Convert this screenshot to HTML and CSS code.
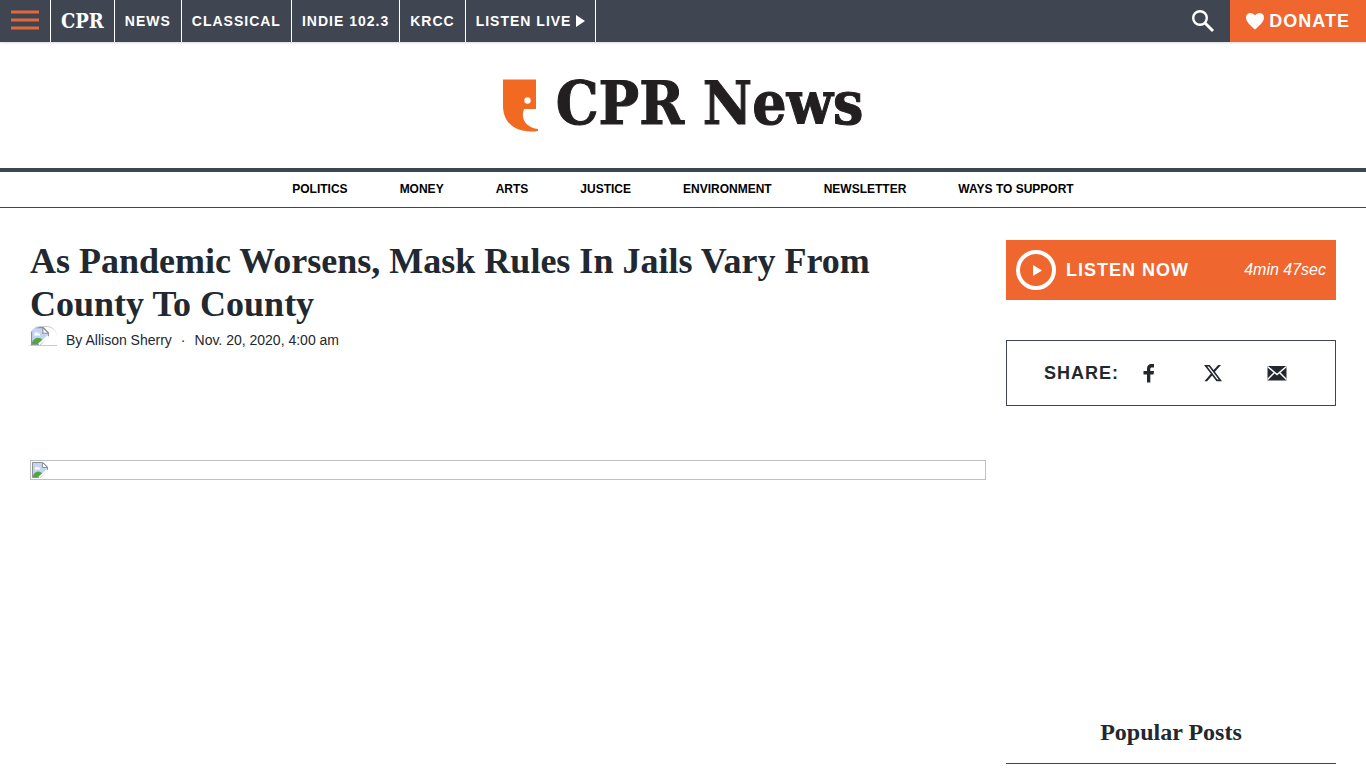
FILE: index.html
```html
<!DOCTYPE html>
<html lang="en">
<head>
<meta charset="utf-8">
<meta name="viewport" content="width=device-width, initial-scale=1">
<title>As Pandemic Worsens, Mask Rules In Jails Vary From County To County | CPR News</title>
<link rel="stylesheet" href="styles.css">
</head>
<body>
<svg class="defs" aria-hidden="true">
  <symbol id="broken" viewBox="0 0 16 16">
    <path d="M.5.5h10.500l4.500 4.500v10.500H.5z" fill="#c3d5f3" stroke="#8d9298"/>
    <path d="M3 6.500c0-2 2.500-2.500 3-1 2-.3 2.500 1.500 1.500 2H3z" fill="#fff"/>
    <path d="M1 15v-1.500c2-4.500 7-5.500 10-1l1 2.500z" fill="#53a541"/>
    <path d="M8.500 16l7.500-7.500V16z" fill="#fff"/>
    <path d="M7 15.500l8.500-7.500" stroke="#fff" stroke-width="2"/>
    <path d="M10.500.5v5h5z" fill="#fff" stroke="#8d9298"/>
  </symbol>
</svg>
<header>
  <div class="topbar">
    <button class="menu" type="button" aria-label="Menu">
      <svg width="28" height="20" viewBox="0 0 28 20"><path d="M0 2h28M0 10h28M0 18h28" stroke="#e2683a" stroke-width="3"/></svg>
    </button>
    <nav class="stations" aria-label="Stations">
      <a class="cpr" href="#">CPR</a>
      <a href="#">NEWS</a>
      <a href="#">CLASSICAL</a>
      <a href="#">INDIE 102.3</a>
      <a href="#">KRCC</a>
      <a class="live" href="#">LISTEN LIVE<svg width="9" height="12" viewBox="0 0 9 12"><path d="M0 0l9 6-9 6z" fill="#fff"/></svg></a>
    </nav>
    <button class="search" type="button" aria-label="Search">
      <svg width="24" height="24" viewBox="0 0 24 24" fill="none" stroke="#fff"><circle cx="9" cy="9" r="6.800" stroke-width="2.400"/><path d="M14 14l8 8" stroke-width="3"/></svg>
    </button>
    <a class="donate" href="#"><svg width="20" height="18" viewBox="0 0 20 18"><path d="M10 17.500C6 14 1 10 1 5.500 1 0 7.500-.5 10 3.500 12.500-.5 19 0 19 5.500c0 4.500-5 8.500-9 12z" fill="#fff"/></svg>DONATE</a>
  </div>
  <a class="brand" href="#">
    <svg width="36" height="54" viewBox="0 0 36 54"><path fill="#f26a21" fill-rule="evenodd" d="M0 1.500h33V31H21c-4 11 3 18.500 14 20v1.500c-1 1.500-6 1-11 .7C7 52 0 40 0 28zM24.500 19.300a3.200 3.200 0 1 0 0 6.400 3.200 3.200 0 0 0 0-6.400z"/></svg>
    <span>CPR News</span>
  </a>
  <nav class="sections" aria-label="Sections">
    <a href="#">POLITICS</a>
    <a href="#">MONEY</a>
    <a href="#">ARTS</a>
    <a href="#">JUSTICE</a>
    <a href="#">ENVIRONMENT</a>
    <a href="#">NEWSLETTER</a>
    <a href="#">WAYS TO SUPPORT</a>
  </nav>
</header>
<main>
  <article>
    <h1>As Pandemic Worsens, Mask Rules In Jails Vary From County To County</h1>
    <div class="byline">
      <span class="avatar"><svg width="18" height="18"><use href="#broken"/></svg></span>
      <span>By <a href="#">Allison Sherry</a></span>
      <span>·</span>
      <time datetime="2020-11-20T04:00">Nov. 20, 2020, 4:00 am</time>
    </div>
    <figure><svg width="16" height="16"><use href="#broken"/></svg></figure>
  </article>
  <aside>
    <button class="listen" type="button">
      <svg width="40" height="40" viewBox="0 0 40 40"><circle cx="20" cy="20" r="18" fill="none" stroke="#fff" stroke-width="4"/><path d="M17 15l9 5.500-9 5.500z" fill="#fff"/></svg>
      <strong>LISTEN NOW</strong>
      <em>4min 47sec</em>
    </button>
    <div class="share">
      <strong>SHARE:</strong>
      <a href="#" aria-label="Facebook"><svg width="20" height="20" viewBox="0 0 20 20"><path fill="#212830" d="M8 19.500v-8H4.500V8H8V5.500c0-3 2-4.500 4-4.500h3v3.500h-2c-1.500 0-1.700.5-1.700 1.500v2H15l-.5 3.500h-3.200v8z"/></svg></a>
      <a href="#" aria-label="X"><svg width="20" height="20" viewBox="0 0 24 24"><path fill="#212830" d="M18.240 2.250h3.310l-7.230 8.260 8.500 11.240h-6.650l-5.220-6.820L4.990 21.750H1.680l7.730-8.840L1.250 2.250h6.830l4.710 6.230zm-1.160 17.520h1.830L7.080 4.130H5.120z"/></svg></a>
      <a href="#" aria-label="Email"><svg width="20" height="20" viewBox="0 0 20 20"><path fill="#212830" d="M.5 3h19v14.500H.5z"/><path fill="none" stroke="#fff" stroke-width="1.500" d="M.5 3.500l9.500 8 9.500-8M.5 16.500l7-7M19.500 16.500l-7-7"/></svg></a>
    </div>
    <h2>Popular Posts</h2>
  </aside>
</main>
</body>
</html>
```
FILE: styles.css
```css
* {
  box-sizing: border-box;
}

html {
  overflow: hidden;
}

body {
  margin: 0;
  background: #fff;
  color: #212830;
  font-family: "Liberation Sans", Arial, sans-serif;
}

a {
  color: inherit;
  text-decoration: none;
}

button {
  border: 0;
  padding: 0;
  background: none;
  color: inherit;
  font: inherit;
  cursor: pointer;
}

svg {
  display: block;
  flex: none;
}

.defs {
  width: 0;
  height: 0;
  position: absolute;
}

.topbar {
  display: flex;
  height: 42px;
  background: #404552;
  color: #fff;
  font-weight: bold;
  box-shadow: 0 1px 2px #d9dae0;
}

.menu {
  display: flex;
  align-items: center;
  padding: 0 11px 2px;
  border-right: 1px solid #fff;
}

.stations {
  display: flex;
}

.stations a {
  display: flex;
  align-items: center;
  padding: 0 10px;
  border-right: 1px solid #fff;
  font-size: 14px;
  letter-spacing: 1px;
}

.stations .cpr {
  font-family: "DejaVu Serif Condensed", "DejaVu Serif", serif;
  font-size: 20px;
  letter-spacing: 0;
}

.live svg {
  margin-left: 5px;
}

.search {
  display: flex;
  align-items: center;
  margin-left: auto;
  padding: 0 15px;
}

.donate {
  display: flex;
  align-items: center;
  gap: 4px;
  padding: 0 16px 0 15px;
  background: #ef662f;
  font-size: 18px;
  letter-spacing: 1px;
}

.brand {
  display: flex;
  align-items: center;
  justify-content: center;
  gap: 17px;
  height: 126px;
  color: #231f20;
  font: bold 60px "DejaVu Serif Condensed", "DejaVu Serif", serif;
  -webkit-text-stroke: 1px #231f20;
  white-space: nowrap;
}

.brand span {
  padding-bottom: 4px;
}

.sections {
  display: flex;
  justify-content: center;
  gap: 52px;
  padding: 10px 0 11px;
  border-top: 4px solid #404552;
  border-bottom: 1px solid #404552;
  color: #000;
  font-size: 12px;
  font-weight: bold;
  line-height: 14px;
}

main {
  display: grid;
  grid-template-columns: minmax(0, 1fr) 330px;
  gap: 20px;
  padding: 32px 30px 0;
}

h1,
h2 {
  margin: 0;
  font-family: "Liberation Serif", "Times New Roman", serif;
}

h1 {
  font-size: 36px;
  line-height: 43px;
}

.byline {
  display: flex;
  align-items: center;
  gap: 9px;
  height: 28px;
  font-size: 14px;
}

.avatar {
  width: 27px;
  height: 20px;
  padding: 0 1px;
  border: solid #c8cbd0;
  border-width: 1px 0;
  border-radius: 10px 10px 0 0;
  overflow: hidden;
  align-self: flex-start;
}

figure {
  height: 20px;
  margin: 106px 0 0;
  padding: 1px;
  border: 1px solid #c0c0c0;
}

.listen {
  display: flex;
  align-items: center;
  gap: 10px;
  width: 100%;
  height: 60px;
  padding: 0 10px;
  background: #ef662f;
  color: #fff;
}

.listen strong,
.share strong {
  font-size: 18px;
  letter-spacing: 1px;
}

.listen em {
  margin-left: auto;
  font-size: 16px;
}

.share {
  display: flex;
  align-items: center;
  gap: 44px;
  height: 66px;
  margin-top: 40px;
  padding: 0 37px;
  border: 1px solid #404552;
}

.share strong {
  margin-right: -24px;
}

h2 {
  margin-top: 312px;
  padding-bottom: 17px;
  border-bottom: 1px solid #404552;
  font-size: 24px;
  line-height: 28px;
  text-align: center;
}
```
